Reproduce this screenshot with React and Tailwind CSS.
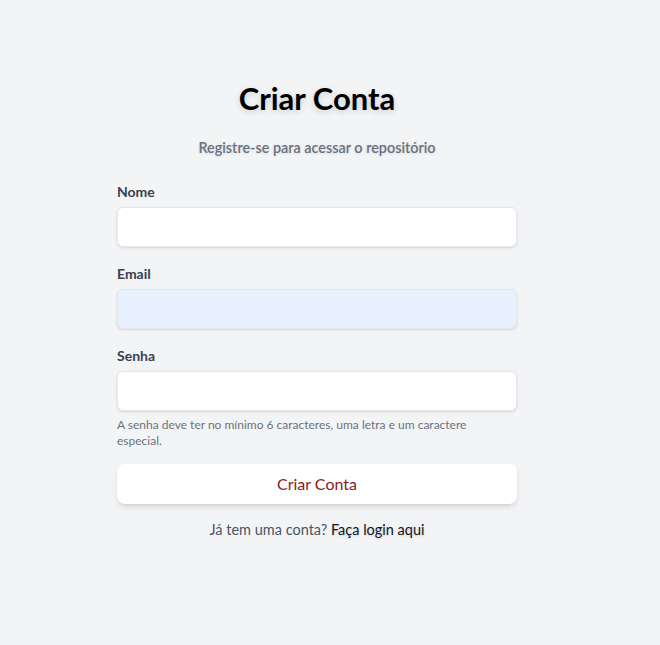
import React from "react";

export default function App() {
  return (
    <div className="min-h-screen w-full bg-[#f3f4f6] flex justify-center pr-[26px] font-['Lato',sans-serif]">
      <div className="w-[400px] pt-[80px] flex flex-col">
        <h1 className="text-center text-[31px] leading-[36px] font-bold text-black [text-shadow:0_2px_6px_rgba(0,0,0,0.16)]">
          Criar Conta
        </h1>
        <p className="mt-[22px] text-center text-[14.4px] leading-5 font-semibold text-[#6b7280] [text-shadow:0_1px_3px_rgba(0,0,0,0.12)]">
          Registre-se para acessar o repositório
        </p>
        <form className="mt-[24px] flex flex-col">
          <label className="text-sm leading-5 font-bold text-[#374151]">Nome</label>
          <input
            type="text"
            className="mt-[5px] h-[40px] w-full rounded-md border border-[#e5e7eb] bg-white shadow-sm outline-none"
          />
          <label className="mt-[17px] text-sm leading-5 font-bold text-[#374151]">Email</label>
          <input
            type="email"
            className="mt-[5px] h-[40px] w-full rounded-md border border-[#e5e7eb] bg-[#e8f0fe] shadow-sm outline-none"
          />
          <label className="mt-[17px] text-sm leading-5 font-bold text-[#374151]">Senha</label>
          <input
            type="password"
            className="mt-[5px] h-[40px] w-full rounded-md border border-[#e5e7eb] bg-white shadow-sm outline-none"
          />
          <p className="mt-[6px] text-xs leading-4 text-[#6b7280] pr-[20px]">
            A senha deve ter no mínimo 6 caracteres, uma letra e um caractere especial.
          </p>
          <button
            type="button"
            className="mt-[15px] h-[40px] w-full rounded-lg bg-white shadow-md text-base text-[#8b1a1a]"
          >
            Criar Conta
          </button>
        </form>
        <p className="mt-[16px] text-center text-[14.5px] leading-5 text-[#4b5563]">
          Já tem uma conta?{" "}
          <a className="font-normal text-[#111827] [text-shadow:0_1px_2px_rgba(0,0,0,0.15)]">Faça login aqui</a>
        </p>
      </div>
    </div>
  );
}
